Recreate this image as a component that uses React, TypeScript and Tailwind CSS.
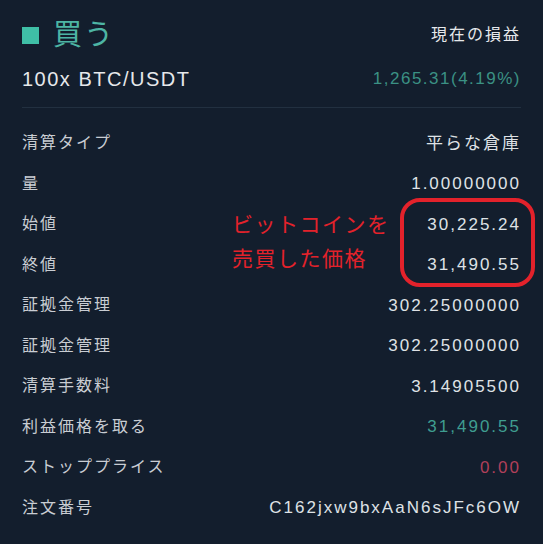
import React from "react";

const rows: { label: string; value: string; color?: string }[] = [
  { label: "清算タイプ", value: "平らな倉庫" },
  { label: "量", value: "1.00000000" },
  { label: "始値", value: "30,225.24" },
  { label: "終値", value: "31,490.55" },
  { label: "証拠金管理", value: "302.25000000" },
  { label: "証拠金管理", value: "302.25000000" },
  { label: "清算手数料", value: "3.14905500" },
  { label: "利益価格を取る", value: "31,490.55", color: "text-[#3f9d90]" },
  { label: "ストッププライス", value: "0.00", color: "text-[#b0405a]" },
  { label: "注文番号", value: "C162jxw9bxAaN6sJFc6OW" },
];

export default function App() {
  return (
    <div
      className="relative w-[543px] h-[544px] bg-[#131e2d] overflow-hidden"
      style={{ fontFamily: '"Liberation Sans", "Noto Sans CJK JP", sans-serif' }}
    >
      <div className="px-[22px] pt-[17px]">
        <div className="flex h-[36px] items-center justify-between">
          <div className="flex items-center">
            <div className="w-[17px] h-[17px] bg-[#3fbfa6]" />
            <span className="ml-[14px] text-[29px] leading-none text-[#4db5a4] tracking-[2px]">買う</span>
          </div>
          <span className="text-[16px] text-[#e6e8eb] tracking-[2px]">現在の損益</span>
        </div>
        <div className="mt-[9px] flex h-[34px] items-center justify-between">
          <span className="text-[20px] text-[#e6e8eb] tracking-[1.5px]">100x BTC/USDT</span>
          <span className="text-[17px] text-[#3b9184] tracking-[1.5px]">1,265.31(4.19%)</span>
        </div>
        <div className="mt-[11px] h-[1px] bg-[#223040]" />
        <div className="mt-[15px] flex flex-col">
          {rows.map((r, i) => (
            <div key={i} className="flex h-[40.5px] items-center justify-between">
              <span className="text-[16px] text-[#c9cdd3] tracking-[2px]">{r.label}</span>
              <span className={`text-[17px] tracking-[2px] ${r.color ?? "text-[#dfe2e6]"}`}>{r.value}</span>
            </div>
          ))}
        </div>
      </div>
      <div className="absolute left-[232px] top-[208px] text-[21px] leading-[34px] text-[#e3222b] tracking-[1.5px]">
        <div>ビットコインを</div>
        <div>売買した価格</div>
      </div>
      <div className="absolute left-[400px] top-[198px] w-[135px] h-[89px] rounded-[20px] border-[4px] border-[#e3222b]" />
    </div>
  );
}
